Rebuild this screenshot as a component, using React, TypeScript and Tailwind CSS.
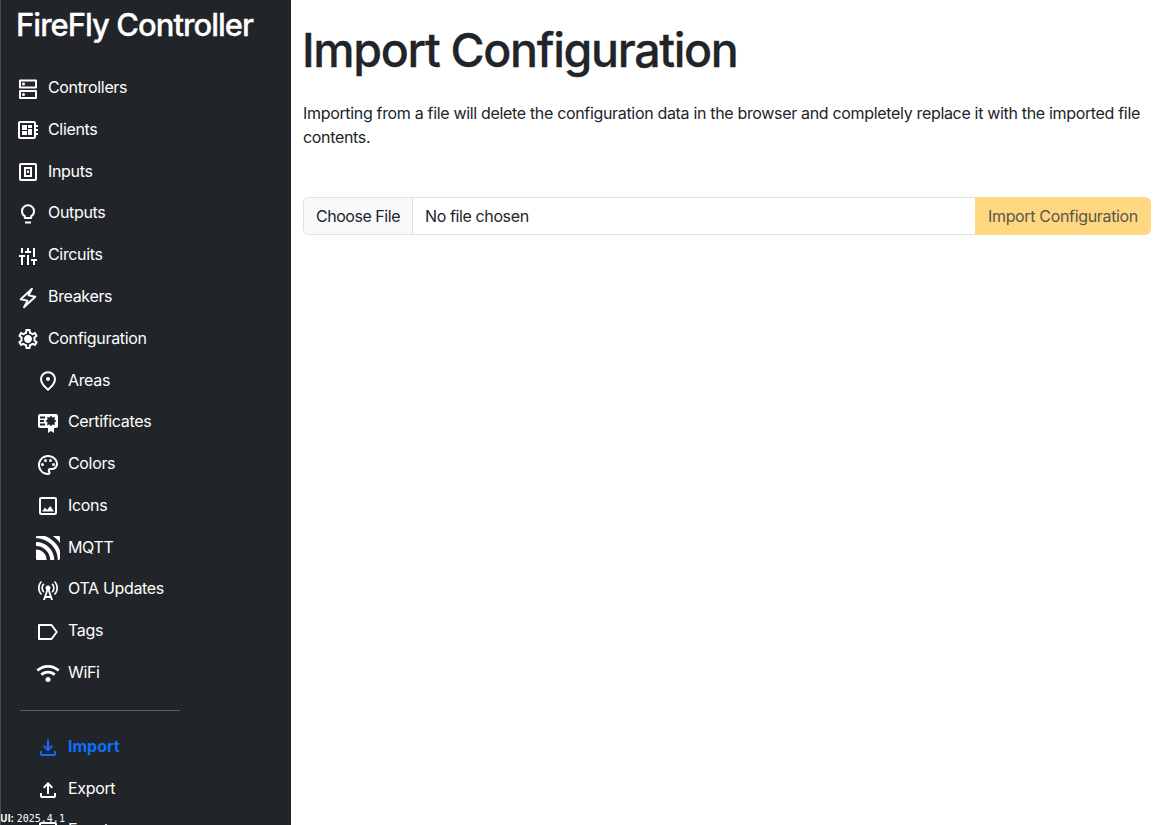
import { MdOutlineDeveloperBoard, MdOutlineSettings, MdOutlinePalette, MdCellTower } from "react-icons/md";
import { SiMqtt } from "react-icons/si";
import type { ReactNode } from "react";

const Svg = ({ children }: { children: ReactNode }) => (
  <svg width="24" height="24" viewBox="0 0 24 24" fill="currentColor">{children}</svg>
);

const Controllers = () => (
  <Svg>
    <path d="M4 2.500h16a1 1 0 0 1 1 1v7a1 1 0 0 1-1 1H4a1 1 0 0 1-1-1v-7a1 1 0 0 1 1-1zm1 2v5h14v-5zM4 13h16a1 1 0 0 1 1 1v7a1 1 0 0 1-1 1H4a1 1 0 0 1-1-1v-7a1 1 0 0 1 1-1zm1 2v5h14v-5z" fillRule="evenodd" />
    <circle cx="7.500" cy="7" r="1.500" />
    <circle cx="7.500" cy="17.500" r="1.500" />
  </Svg>
);

const Inputs = () => (
  <Svg>
    <rect x="4" y="4" width="16" height="16" rx="1" fill="none" stroke="currentColor" strokeWidth="2" />
    <rect x="9" y="8" width="6" height="8" fill="none" stroke="currentColor" strokeWidth="2" />
    <rect x="11" y="10.500" width="2" height="2.500" />
  </Svg>
);

const Bulb = () => (
  <Svg>
    <path d="M8.800 16v-1.800C7 13.100 6 11.300 6 9.200a6 6 0 0 1 12 0c0 2.100-1 3.900-2.800 5V16z" fill="none" stroke="currentColor" strokeWidth="2" strokeLinejoin="round" />
    <rect x="9" y="19.500" width="6" height="2" />
  </Svg>
);

const Circuits = () => (
  <Svg>
    <path d="M5 4h2v5H5zM3 11h6v2H7v8H5v-8H3zM11 4h2v3h2v2H9V7h2zM11 11h2v10h-2zM17 4h2v9h-2zM15 15h6v2h-2v4h-2v-4h-2z" />
  </Svg>
);

const Bolt = () => (
  <Svg>
    <path d="M16 2.800 4.700 13.300l6.800 1.300L8 21.200 19.300 10.700l-6.800-1.300z" fill="none" stroke="currentColor" strokeWidth="1.900" strokeLinejoin="round" />
  </Svg>
);

const Gear = () => (
  <span className="grid size-6 place-items-center">
    <MdOutlineSettings size={24} className="col-start-1 row-start-1" />
    <svg width="24" height="24" viewBox="0 0 24 24" className="col-start-1 row-start-1">
      <circle cx="12" cy="12" r="3.400" fill="currentColor" />
    </svg>
  </span>
);

const Pin = () => (
  <Svg>
    <path d="M12 20.700c-4.700-4-7-7.500-7-10.500a7 7 0 0 1 14 0c0 3-2.300 6.500-7 10.500z" fill="none" stroke="currentColor" strokeWidth="2" />
    <circle cx="12" cy="10" r="2" />
  </Svg>
);

const Certificate = () => (
  <Svg>
    <path d="M4 3h16a2 2 0 0 1 2 2v10a2 2 0 0 1-2 2H4a2 2 0 0 1-2-2V5a2 2 0 0 1 2-2z" />
    <path d="M4 5.500h5v2H4zM4 9h4v2H4zM4 12.500h5v2H4z" fill="#212529" />
    <path d="M15 4.500l1.400 2.100 2.500-.5-.5 2.500 2.100 1.400-2.100 1.400.5 2.500-2.500-.5L15 15.500l-1.400-2.100-2.500.5.500-2.500L9.500 10l2.100-1.400-.5-2.500 2.500.5z" fill="#212529" />
    <path d="M12 14.500l3 1 3-1v7.500l-3-2-3 2z" />
  </Svg>
);

const Picture = () => (
  <Svg>
    <rect x="4" y="4" width="16" height="16" rx="1" fill="none" stroke="currentColor" strokeWidth="2" />
    <path d="M6 17.500l3-4 2 2.500 3.200-4 3.800 5.500z" />
  </Svg>
);

const Tag = () => (
  <Svg>
    <path d="M3 5h12.500l5.300 7-5.300 7H3z" fill="none" stroke="currentColor" strokeWidth="2" strokeLinejoin="round" />
  </Svg>
);

const Wifi = () => (
  <Svg>
    <path d="M1.300 9.600a15.500 15.500 0 0 1 21.400 0M5.300 13.800a9.500 9.500 0 0 1 13.400 0" fill="none" stroke="currentColor" strokeWidth="2.800" />
    <circle cx="12" cy="18.500" r="2.500" />
  </Svg>
);

const Download = () => (
  <Svg>
    <path d="M12 15.500l-5-5 1.400-1.450 2.600 2.600V3.500h2v8.150l2.600-2.600L17 10.500zM6 20q-.825 0-1.412-.587T4 18v-3h2v3h12v-3h2v3q0 .825-.587 1.413T18 20z" />
  </Svg>
);

const Upload = () => (
  <Svg>
    <path d="M11 16V7.850l-2.600 2.600L7 9l5-5 5 5-1.400 1.450-2.600-2.600V16zM6 20q-.825 0-1.412-.587T4 18v-3h2v3h12v-3h2v3q0 .825-.587 1.413T18 20z" />
  </Svg>
);

const top = [
  { label: "Controllers", icon: <Controllers /> },
  { label: "Clients", icon: <MdOutlineDeveloperBoard size={24} /> },
  { label: "Inputs", icon: <Inputs /> },
  { label: "Outputs", icon: <Bulb /> },
  { label: "Circuits", icon: <Circuits /> },
  { label: "Breakers", icon: <Bolt /> },
  { label: "Configuration", icon: <Gear /> },
];

const sub = [
  { label: "Areas", icon: <Pin /> },
  { label: "Certificates", icon: <Certificate /> },
  { label: "Colors", icon: <MdOutlinePalette size={24} /> },
  { label: "Icons", icon: <Picture /> },
  { label: "MQTT", icon: <SiMqtt size={24} /> },
  { label: "OTA Updates", icon: <MdCellTower size={24} /> },
  { label: "Tags", icon: <Tag /> },
  { label: "WiFi", icon: <Wifi /> },
];

const Row = ({ label, icon, active }: { label: string; icon: ReactNode; active?: boolean }) => (
  <a className={active ? "flex h-[41.77px] shrink-0 items-center gap-2 font-bold text-[#0d6efd]" : "flex h-[41.77px] shrink-0 items-center gap-2 text-white"}>
    <span className="mt-[3px] shrink-0">{icon}</span>
    <span className={active ? "tracking-[-0.001em]" : "tracking-[-0.021em]"}>{label}</span>
  </a>
);

export default function App() {
  return (
    <div className="flex h-[825px] w-[1160px] overflow-hidden bg-white font-[Inter,sans-serif] text-base text-[#212529]">
      <aside className="relative flex w-[291px] shrink-0 flex-col overflow-hidden border-l border-[#4a4d51] bg-[#212529] pl-[15px] text-white">
        <h2 className="mt-[6px] h-[38px] shrink-0 text-[31px] leading-[38px] font-medium tracking-[-0.0315em] [-webkit-text-stroke:0.3px_currentColor]">FireFly Controller</h2>
        <nav className="mt-[22.300px] flex flex-col">
          {top.map((r) => <Row key={r.label} {...r} />)}
          <div className="flex flex-col pl-5">
            {sub.map((r) => <Row key={r.label} {...r} />)}
          </div>
          <hr className="mt-[16.900px] mb-[14.950px] ml-1 w-40 border-[#5d6063]" />
          <div className="flex flex-col pl-5">
            <Row label="Import" icon={<Download />} active />
            <Row label="Export" icon={<Upload />} />
            <div className="-mt-px">
              <Row label="Events" icon={<Picture />} />
            </div>
          </div>
        </nav>
        <div className="absolute bottom-0 -left-px flex h-[13px] items-center gap-[3px] text-[10px] leading-[13px]">
          <b className="font-['Open_Sans',sans-serif]">UI:</b>
          <span className="font-['DejaVu_Sans_Mono',monospace] text-[10px]">2025.4.1</span>
        </div>
      </aside>
      <main className="flex flex-1 flex-col pt-[21px] pr-[9px] pl-3">
        <h1 className="-ml-px text-[46.500px] leading-[58px] font-medium tracking-[-0.0285em] [-webkit-text-stroke:0.3px_currentColor]">Import Configuration</h1>
        <p className="mt-[22px] leading-6 tracking-[-0.0205em]">
          Importing from a file will delete the configuration data in the browser and completely replace it with the imported file contents.
        </p>
        <div className="mt-12 flex h-[38px]">
          <div className="flex flex-1 items-center overflow-hidden rounded-l-md border border-r-0 border-[#dee2e6] tracking-[-0.028em]">
            <button className="h-full w-[109px] shrink-0 border-r border-[#dee2e6] bg-[#f8f9fa] tracking-[-0.028em]">Choose File</button>
            <span className="pl-3 tracking-[-0.024em]">No file chosen</span>
          </div>
          <button className="w-44 rounded-r-md bg-[#ffd780] tracking-[-0.021em] text-[#59564c]">Import Configuration</button>
        </div>
      </main>
    </div>
  );
}
